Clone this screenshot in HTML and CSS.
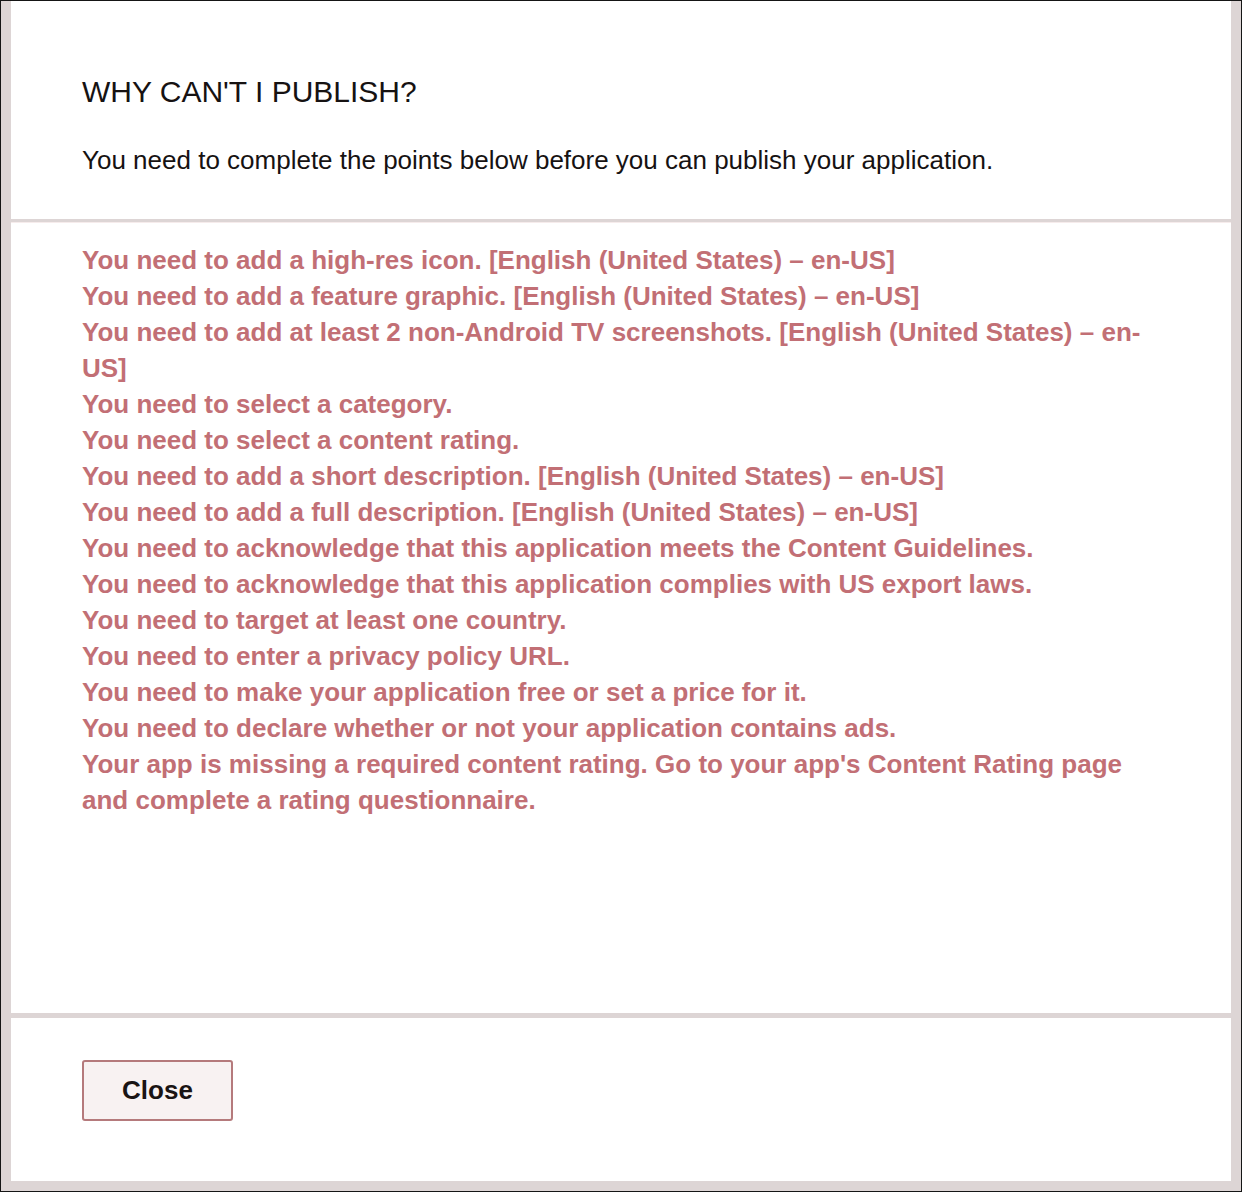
FILE: index.html
```html
<!DOCTYPE html>
<html>
<head>
<meta charset="utf-8">
<link rel="stylesheet" href="styles.css">
</head>
<body>
<div class="frame">
  <div class="dialog">
    <div class="header">
      <h1 class="title">WHY CAN'T I PUBLISH?</h1>
      <p class="lead">You need to complete the points below before you can publish your application.</p>
    </div>
    <div class="body">
      <ul class="issues">
        <li>You need to add a high-res icon. [English (United States) – en-US]</li>
        <li>You need to add a feature graphic. [English (United States) – en-US]</li>
        <li>You need to add at least 2 non-Android TV screenshots. [English (United States) – en-US]</li>
        <li>You need to select a category.</li>
        <li>You need to select a content rating.</li>
        <li>You need to add a short description. [English (United States) – en-US]</li>
        <li>You need to add a full description. [English (United States) – en-US]</li>
        <li>You need to acknowledge that this application meets the Content Guidelines.</li>
        <li>You need to acknowledge that this application complies with US export laws.</li>
        <li>You need to target at least one country.</li>
        <li>You need to enter a privacy policy URL.</li>
        <li>You need to make your application free or set a price for it.</li>
        <li>You need to declare whether or not your application contains ads.</li>
        <li>Your app is missing a required content rating. Go to your app's Content Rating page and complete a rating questionnaire.</li>
      </ul>
    </div>
    <div class="footer">
      <button class="btn">Close</button>
    </div>
  </div>
</div>
</body>
</html>
```

FILE: styles.css
```css
html, body {
  margin: 0;
  padding: 0;
  background: #ddd5d5;
}
.frame {
  box-sizing: border-box;
  width: 1242px;
  height: 1192px;
  border: 1px solid #151515;
  background: #ddd5d5;
  padding: 0 10px 10px 10px;
  display: flex;
}
.dialog {
  flex: 1;
  background: #ffffff;
  display: flex;
  flex-direction: column;
  font-family: "Liberation Sans", Arial, sans-serif;
}
.header {
  height: 221px;
  box-sizing: border-box;
  padding: 73px 70px 0 71px;
  border-bottom: 3px solid #ddd5d5;
  box-shadow: 0 1px 0 #f6ecec;
}
.title {
  margin: 0;
  font-size: 30px;
  font-weight: normal;
  line-height: 36px;
  color: #161212;
}
.lead {
  margin: 35px 0 0;
  font-size: 26px;
  line-height: 30px;
  color: #161212;
}
.body {
  flex: 1;
  padding: 20px 74px 0 71px;
}
.issues {
  list-style: none;
  margin: 0;
  padding: 0;
}
.issues li {
  font-size: 26px;
  line-height: 36px;
  font-weight: bold;
  color: #c26f75;
}
.footer {
  height: 168px;
  box-sizing: border-box;
  border-top: 5px solid #ddd5d5;
  padding: 42px 0 0 71px;
}
.btn {
  width: 151px;
  height: 61px;
  border: 2px solid #b57a7c;
  border-radius: 3px;
  background: #f8f2f2;
  font-family: "Liberation Sans", Arial, sans-serif;
  font-size: 26px;
  font-weight: bold;
  color: #1a1414;
  padding: 0;
}
```
